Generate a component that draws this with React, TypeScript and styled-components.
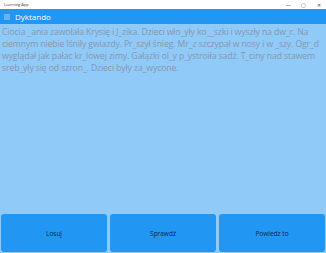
import styled, { createGlobalStyle } from 'styled-components'

const Global = createGlobalStyle`
  html, body { margin: 0; padding: 0; }
  body { font-family: 'Open Sans', 'Noto Sans', sans-serif; }
`

const Window = styled.div`
  width: 326px;
  height: 253px;
  display: flex;
  flex-direction: column;
  background: #90caf9;
  overflow: hidden;
`

const TitleBar = styled.div`
  height: 9px;
  flex-shrink: 0;
  background: #ffffff;
  display: flex;
  align-items: center;
  padding-left: 4px;
  font-size: 4px;
  color: #333;
`

const Title = styled.span`
  flex: 1;
`

const WinControls = styled.div`
  display: flex;
  height: 100%;
`

const WinBtn = styled.div`
  width: 15px;
  height: 9px;
  display: flex;
  align-items: center;
  justify-content: center;
  font-size: 5px;
  color: #444;
`

const AppBar = styled.header`
  height: 15px;
  flex-shrink: 0;
  background: #2196f3;
  display: flex;
  align-items: center;
  gap: 5px;
  padding-left: 4px;
`

const MenuIcon = styled.div`
  width: 6px;
  height: 6px;
  background: #64b5f6;
`

const AppTitle = styled.span`
  color: #ffffff;
  font-size: 8px;
`

const Content = styled.main`
  flex: 1;
  padding: 2px 2px 0 2px;
  font-size: 8.7px;
  letter-spacing: -0.12px;
  line-height: 12px;
  color: #8798ab;
`

const ButtonRow = styled.div`
  display: grid;
  grid-template-columns: repeat(3, 1fr);
  gap: 3px;
  padding: 0 1px 1px 1px;
  height: 38px;
`

const ActionButton = styled.button`
  border: none;
  border-radius: 3px;
  background: #2196f3;
  color: #0d2a4d;
  font-family: 'Open Sans', sans-serif;
  font-size: 6.5px;
  padding: 0;
`

export default function App() {
  return (
    <Window>
      <Global />
      <TitleBar>
        <Title>Learning App</Title>
        <WinControls>
          <WinBtn>—</WinBtn>
          <WinBtn>▢</WinBtn>
          <WinBtn>✕</WinBtn>
        </WinControls>
      </TitleBar>
      <AppBar>
        <MenuIcon />
        <AppTitle>Dyktando</AppTitle>
      </AppBar>
      <Content>
        Ciocia _ania zawołała Krysię i J_zika. Dzieci wło_yły ko__szki i wyszły na dw_r. Na ciemnym niebie lśniły gwiazdy. Pr_szył śnieg. Mr_z szczypał w nosy i w _szy. Ogr_d wyglądał jak pałac kr_lowej zimy. Gałązki ol_y p_ystroiła sadź. T_ciny nad stawem sreb_yły się od szron_. Dzieci były za_wycone.
      </Content>
      <ButtonRow>
        <ActionButton>Losuj</ActionButton>
        <ActionButton>Sprawdź</ActionButton>
        <ActionButton>Powiedz to</ActionButton>
      </ButtonRow>
    </Window>
  )
}
